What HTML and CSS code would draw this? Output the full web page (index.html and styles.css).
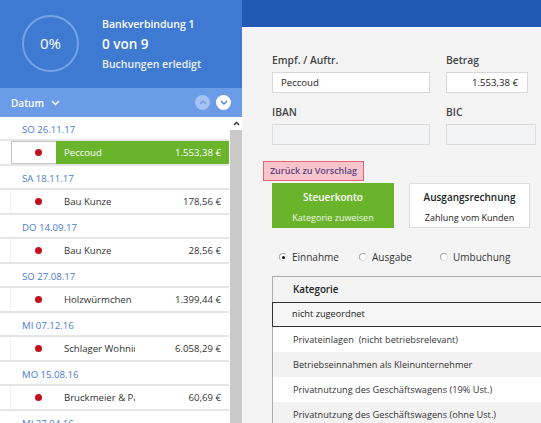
FILE: index.html
```html
<!DOCTYPE html>
<html lang="de">
<head>
<meta charset="utf-8">
<link rel="stylesheet" href="styles.css">
</head>
<body>
<div class="app">
  <aside class="left">
    <div class="summary">
      <div class="ring">0%</div>
      <div class="stats">
        <div class="bank">Bankverbindung 1</div>
        <div class="count">0 von 9</div>
        <div class="done">Buchungen erledigt</div>
      </div>
    </div>
    <div class="sortbar">
      <span class="sort">Datum
        <svg class="chev" width="9" height="6" viewBox="0 0 9 6"><path d="M1 1l3.5 3.5L8 1" fill="none" stroke="#fff" stroke-width="1.4"/></svg>
      </span>
      <span class="navbtns">
        <span class="nav up"><svg width="8" height="5" viewBox="0 0 8 5"><path d="M1 4l3-3 3 3" fill="none" stroke="#6c9de8" stroke-width="1.4"/></svg></span>
        <span class="nav down"><svg width="8" height="5" viewBox="0 0 8 5"><path d="M1 1l3 3 3-3" fill="none" stroke="#4a80da" stroke-width="1.4"/></svg></span>
      </span>
    </div>
    <div class="listwrap">
      <div class="list">
        <div class="date">SO 26.11.17</div>
        <div class="row selected"><div class="spacer"></div><div class="mark"><i class="dot"></i></div><div class="main"><span class="name">Peccoud</span><span class="amt">1.553,38 €</span></div></div>
        <div class="date">SA 18.11.17</div>
        <div class="row"><div class="spacer"></div><div class="mark"><i class="dot"></i></div><div class="main"><span class="name">Bau Kunze</span><span class="amt">178,56 €</span></div></div>
        <div class="date">DO 14.09.17</div>
        <div class="row"><div class="spacer"></div><div class="mark"><i class="dot"></i></div><div class="main"><span class="name">Bau Kunze</span><span class="amt">28,56 €</span></div></div>
        <div class="date">SO 27.08.17</div>
        <div class="row"><div class="spacer"></div><div class="mark"><i class="dot"></i></div><div class="main"><span class="name">Holzwürmchen</span><span class="amt">1.399,44 €</span></div></div>
        <div class="date">MI 07.12.16</div>
        <div class="row"><div class="spacer"></div><div class="mark"><i class="dot"></i></div><div class="main"><span class="name">Schlager Wohnideen</span><span class="amt">6.058,29 €</span></div></div>
        <div class="date">MO 15.08.16</div>
        <div class="row"><div class="spacer"></div><div class="mark"><i class="dot"></i></div><div class="main"><span class="name">Bruckmeier &amp; Partner</span><span class="amt">60,69 €</span></div></div>
        <div class="date">MI 27.04.16</div>
        <div class="row"><div class="spacer"></div><div class="mark"><i class="dot"></i></div><div class="main"><span class="name">Bau Kunze</span><span class="amt">12,00 €</span></div></div>
      </div>
      <div class="scroll">
        <div class="arrow"><svg width="7" height="5" viewBox="0 0 7 5"><path d="M1 4l2.5-2.5L6 4" fill="none" stroke="#333" stroke-width="1.4"/></svg></div>
        <div class="thumb"></div>
      </div>
    </div>
  </aside>
  <main class="right">
    <div class="topbar"></div>
    <div class="content">
      <div class="fields">
        <div class="field">
          <div class="label">Empf. / Auftr.</div>
          <div class="input wide">Peccoud</div>
        </div>
        <div class="field">
          <div class="label">Betrag</div>
          <div class="input amount">1.553,38 €</div>
        </div>
        <div class="field">
          <div class="label">IBAN</div>
          <div class="input wide disabled"></div>
        </div>
        <div class="field">
          <div class="label">BIC</div>
          <div class="input bic disabled"></div>
        </div>
      </div>
      <div class="back">Zurück zu Vorschlag</div>
      <div class="cards">
        <div class="card active">
          <div class="card-title">Steuerkonto</div>
          <div class="card-sub">Kategorie zuweisen</div>
        </div>
        <div class="card">
          <div class="card-title">Ausgangsrechnung</div>
          <div class="card-sub">Zahlung vom Kunden</div>
        </div>
      </div>
      <div class="radios">
        <label class="radio checked"><span class="circle"></span>Einnahme</label>
        <label class="radio"><span class="circle"></span>Ausgabe</label>
        <label class="radio"><span class="circle"></span>Umbuchung</label>
      </div>
      <div class="table">
        <div class="thead">Kategorie</div>
        <div class="tr current">nicht zugeordnet</div>
        <div class="tr">Privateinlagen&nbsp; (nicht betriebsrelevant)</div>
        <div class="tr alt">Betriebseinnahmen als Kleinunternehmer</div>
        <div class="tr">Privatnutzung des Geschäftswagens (19% Ust.)</div>
        <div class="tr alt">Privatnutzung des Geschäftswagens (ohne Ust.)</div>
      </div>
    </div>
  </main>
</div>
</body>
</html>
```

FILE: styles.css
```css
* { box-sizing: border-box; }
html, body { margin: 0; padding: 0; }
body {
  font-family: "Open Sans", "Noto Sans", "Liberation Sans", sans-serif;
  font-size: 9.5px;
  color: #333;
  background: #f4f4f5;
}
.app {
  display: flex;
  width: 541px;
  height: 423px;
  overflow: hidden;
}
.left {
  width: 242px;
  flex: none;
  display: flex;
  flex-direction: column;
  background: #fff;
}
.summary {
  height: 88px;
  background: #3e79d2;
  display: flex;
  align-items: center;
  padding-left: 22px;
  color: #fff;
}
.ring {
  width: 57px;
  height: 57px;
  border: 2px solid #76a2e6;
  border-radius: 50%;
  display: flex;
  align-items: center;
  justify-content: center;
  font-size: 15px;
  margin-top: -2px;
}
.stats {
  margin-left: 23px;
  display: flex;
  flex-direction: column;
  margin-top: -1px;
}
.bank { font-size: 10.5px; font-weight: 600; line-height: 16px; }
.count { font-size: 13.5px; font-weight: 600; line-height: 24px; }
.done { font-size: 10.5px; font-weight: 600; line-height: 16px; color: #eef3fc; }
.sortbar {
  height: 29px;
  background: #6b9ce8;
  display: flex;
  align-items: center;
  justify-content: space-between;
  padding: 0 11px 0 11px;
  color: #fff;
}
.sort { font-size: 10px; font-weight: 600; display: flex; align-items: center; }
.chev { margin-left: 7px; }
.navbtns { display: flex; gap: 6px; }
.nav {
  width: 15px;
  height: 15px;
  border-radius: 50%;
  display: flex;
  align-items: center;
  justify-content: center;
}
.nav.up { background: #a4c3f2; }
.nav.down { background: #fff; }
.listwrap {
  flex: 1;
  display: flex;
  min-height: 0;
}
.list {
  width: 230px;
  flex: none;
  padding-right: 1px;
}
.date {
  height: 24px;
  padding: 4px 0 0 22px;
  line-height: 18px;
  color: #4a7bd0;
  font-size: 9.6px;
  border-bottom: 2px solid #e6e6e6;
}
.row {
  height: 25px;
  display: flex;
  border-bottom: 2px solid #e6e6e6;
  font-size: 9.6px;
  color: #333;
}
.spacer {
  width: 11px;
  flex: none;
  border-right: 1px solid #f2f2f2;
}
.mark {
  width: 45px;
  flex: none;
  display: flex;
  align-items: center;
  padding-left: 24px;
}
.dot {
  width: 7px;
  height: 7px;
  border-radius: 50%;
  background: #c3101f;
}
.main {
  flex: 1;
  display: flex;
  align-items: center;
}
.name {
  width: 79px;
  padding-left: 8px;
  white-space: nowrap;
  overflow: hidden;
}
.amt {
  flex: 1;
  text-align: right;
  padding-right: 8px;
  white-space: nowrap;
}
.row.selected .mark {
  border: 1px solid #c4c4c4;
  border-right: none;
  padding-left: 23px;
}
.row.selected .spacer { border-right: none; }
.row.selected .main {
  background: #6ab42b;
  color: #fff;
}
.scroll {
  width: 12px;
  flex: none;
  display: flex;
  flex-direction: column;
}
.arrow {
  height: 13px;
  display: flex;
  align-items: center;
  justify-content: center;
  background: #fff;
}
.thumb {
  flex: 1;
  background: #c9c9c9;
}
.right {
  flex: 1;
  display: flex;
  flex-direction: column;
  background: #f4f4f5;
}
.topbar {
  height: 28px;
  background: #2159b4;
  border-bottom: 1px solid #fff;
  flex: none;
}
.content {
  padding: 25px 0 0 30px;
}
.fields {
  display: grid;
  grid-template-columns: 158px 90px;
  column-gap: 16px;
  row-gap: 12px;
}
.label {
  font-size: 10.3px;
  font-weight: 600;
  line-height: 14px;
  margin-bottom: 5px;
  color: #444;
}
.input {
  height: 21px;
  background: #fff;
  border: 1px solid #d8d8d8;
  font-size: 9.6px;
  line-height: 19px;
  padding: 0 8px;
  color: #222;
  white-space: nowrap;
}
.input.amount { width: 82px; text-align: right; padding-right: 9px; }
.input.bic { width: 90px; }
.input.disabled { background: #f2f3f4; border-color: #dcdcdc; }
.back {
  margin: 16px 0 0 -9px;
  width: 101px;
  height: 20px;
  border: 1px solid #e8636f;
  background: #f8c5cb;
  color: #5b4284;
  font-size: 9px;
  font-weight: 600;
  line-height: 18px;
  text-align: center;
  white-space: nowrap;
}
.cards {
  display: flex;
  gap: 15px;
  margin-top: 2px;
}
.card {
  width: 121px;
  height: 45px;
  background: #fff;
  border: 1px solid #dedede;
  display: flex;
  flex-direction: column;
  align-items: center;
  color: #222;
  white-space: nowrap;
}
.card.active {
  width: 122px;
  background: #6ab42b;
  border-color: #6ab42b;
  color: #fff;
}
.card-title { font-size: 10px; font-weight: 600; margin-top: 5px; line-height: 16px; }
.card-sub { font-size: 9px; margin-top: 6px; line-height: 14px; }
.card.active .card-sub { color: #eef7e6; }
.radios {
  display: flex;
  margin-top: 21px;
  padding-left: 7px;
  height: 16px;
  align-items: center;
}
.radio {
  display: flex;
  align-items: center;
  font-size: 10px;
  color: #333;
}
.radio:nth-child(1) { width: 80px; }
.radio:nth-child(2) { width: 81px; }
.circle {
  width: 8px;
  height: 8px;
  border-radius: 50%;
  border: 1px solid #a8a8a8;
  border-right-color: #e0e0e0;
  border-bottom-color: #e0e0e0;
  background: #fff;
  margin-right: 5px;
  display: flex;
  align-items: center;
  justify-content: center;
}
.radio.checked .circle::after {
  content: "";
  width: 3px;
  height: 3px;
  border-radius: 50%;
  background: #111;
}
.table {
  margin-top: 11px;
  border-top: 1px solid #adadad;
  border-left: 1px solid #adadad;
}
.thead {
  height: 25px;
  line-height: 25px;
  padding-left: 20px;
  font-weight: 600;
  font-size: 9.8px;
  color: #222;
}
.tr {
  height: 25px;
  line-height: 25px;
  padding-left: 20px;
  background: #fff;
  font-size: 9.2px;
  color: #333;
  white-space: nowrap;
}
.tr.alt { background: #f2f2f2; }
.tr.current {
  background: #f6f6f6;
  border: 1px solid #333;
  border-right: none;
  line-height: 22px;
  padding-left: 19px;
  margin-left: -1px;
  color: #222;
  font-weight: 500;
}
```
